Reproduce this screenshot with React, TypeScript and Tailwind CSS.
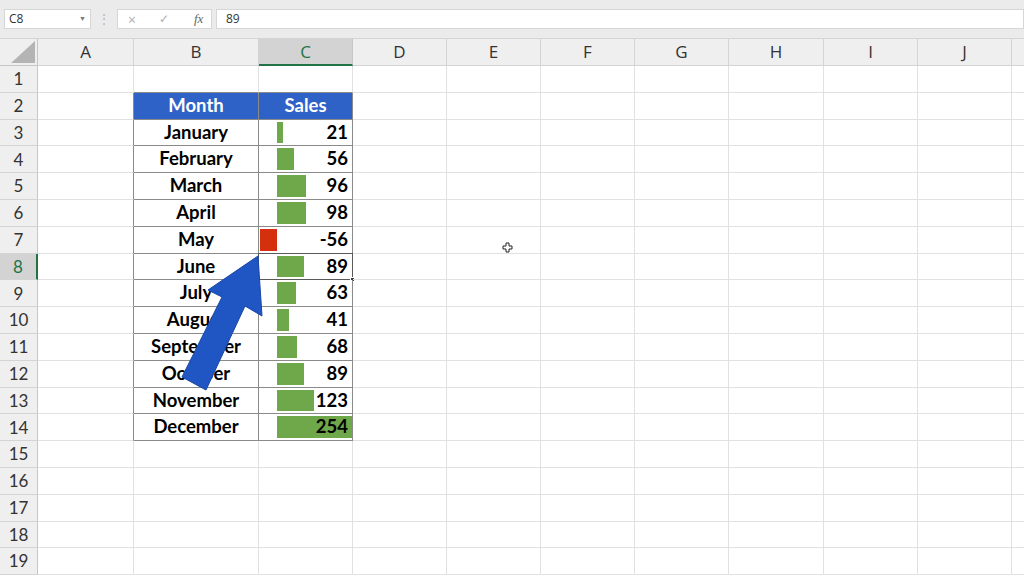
import React from "react";

const cols = [
  { key: "A", w: "w-[96px]" },
  { key: "B", w: "w-[125px]" },
  { key: "C", w: "w-[94px]" },
  { key: "D", w: "w-[94px]" },
  { key: "E", w: "w-[94px]" },
  { key: "F", w: "w-[94px]" },
  { key: "G", w: "w-[94px]" },
  { key: "H", w: "w-[95px]" },
  { key: "I", w: "w-[94px]" },
  { key: "J", w: "w-[94px]" },
  { key: "K", w: "w-[94px]" },
];

const data: [string, number][] = [
  ["January", 21],
  ["February", 56],
  ["March", 96],
  ["April", 98],
  ["May", -56],
  ["June", 89],
  ["July", 63],
  ["August", 41],
  ["September", 68],
  ["October", 89],
  ["November", 123],
  ["December", 254],
];

const SCALE = 0.3;

function SalesCell({ value }: { value: number }) {
  return (
    <div className="relative flex h-full w-full py-[2px]">
      <div className="flex w-[18px] justify-end">
        {value < 0 && (
          <div className="h-full bg-[#d5300d]" style={{ width: Math.abs(value) * SCALE }} />
        )}
      </div>
      {value > 0 && (
        <div className="h-full bg-[#6fa84a]" style={{ width: value * SCALE }} />
      )}
      <span className="absolute inset-y-0 right-[4px] flex items-center text-[18.5px] font-bold text-black">
        {value}
      </span>
    </div>
  );
}

function Row({ n }: { n: number }) {
  const inTable = n >= 2 && n <= 14;
  const selected = n === 8;
  return (
    <div className="flex h-[26.8px] shrink-0">
      <div
        className={`flex w-[38px] shrink-0 items-center justify-center border-b border-[#d4d4d4] text-[17px] ${
          selected
            ? "border-r-2 border-r-[#217346] bg-[#d3d3d3] text-[#217346]"
            : "border-r border-r-[#c6c6c6] bg-[#efefef] text-[#333]"
        }`}
      >
        {n}
      </div>
      {cols.map((c) => {
        let cls = "border-r border-b border-[#e1e1e1]";
        let content: React.ReactNode = null;
        if (c.key === "A" && inTable) cls = "border-b border-b-[#e1e1e1] border-r border-r-[#8a8a8a]";
        if ((c.key === "B" || c.key === "C") && n === 1) cls = "border-r border-r-[#e1e1e1] border-b border-b-[#8a8a8a]";
        if ((c.key === "B" || c.key === "C") && inTable) {
          if (n === 2) {
            cls = "border-r border-b border-[#8a8a8a] bg-[#2f62c7]";
            content = (
              <span className="flex h-full items-center justify-center text-[18.5px] font-bold text-white">
                {c.key === "B" ? "Month" : "Sales"}
              </span>
            );
          } else {
            const [m, v] = data[n - 3];
            cls = "border-r border-b border-[#8a8a8a] bg-white";
            content =
              c.key === "B" ? (
                <span className="flex h-full items-center justify-center text-[18.5px] font-bold text-black">
                  {m}
                </span>
              ) : (
                <SalesCell value={v} />
              );
          }
        }
        return (
          <div key={c.key} className={`relative shrink-0 ${c.w} ${cls}`}>
            {content}
            {selected && c.key === "C" && (
              <div className="absolute -inset-[1px] border border-[#5a5a5a]">
                <div className="absolute -bottom-[3px] -right-[3px] h-[5px] w-[5px] border border-white bg-[#3a3a3a]" />
              </div>
            )}
          </div>
        );
      })}
    </div>
  );
}

export default function App() {
  return (
    <div
      className="relative h-[576px] w-[1024px] overflow-hidden bg-white"
      style={{ fontFamily: "Lato, 'Open Sans', sans-serif" }}
    >
      {/* formula bar */}
      <div className="flex h-[39px] items-start border-b border-[#d4d4d4] bg-[#ebebeb] pt-[9px] font-['Open_Sans',sans-serif] text-[12px] text-[#333]">
        <div className="ml-[4px] flex h-[20px] w-[87px] items-center justify-between border border-[#d6d6d6] bg-white pl-[4px] pr-[4px]">
          <span>C8</span>
          <span className="text-[7px] text-[#777]">▼</span>
        </div>
        <div className="flex h-[20px] w-[26px] items-center justify-center text-[#b5b5b5]">⋮</div>
        <div className="flex h-[20px] w-[95px] items-center border border-[#d6d6d6] bg-white text-[#b0b0b0]">
          <span className="w-[32px] pl-[10px] text-[14px]">×</span>
          <span className="w-[32px] pl-[9px] text-[12px]">✓</span>
          <span className="pl-[12px] font-['Liberation_Serif',serif] text-[13px] italic text-[#666]">fx</span>
        </div>
        <div className="ml-[4px] flex h-[20px] flex-1 items-center border border-[#d6d6d6] bg-white pl-[9px]">
          89
        </div>
      </div>

      {/* column headers */}
      <div className="flex h-[27px] font-['Open_Sans',sans-serif] text-[17px]">
        <div className="relative w-[38px] shrink-0 border-r border-b border-[#c6c6c6] bg-[#efefef]">
          <svg className="absolute bottom-[2px] right-[2px]" width="24" height="22" viewBox="0 0 24 22">
            <polygon points="24,0 24,22 0,22" fill="#b4b4b4" />
          </svg>
        </div>
        {cols.map((c) => (
          <div
            key={c.key}
            className={`flex shrink-0 items-center justify-center ${c.w} ${
              c.key === "C"
                ? "border-r border-r-[#c6c6c6] border-b-2 border-b-[#217346] bg-[#d3d3d3] text-[#217346]"
                : "border-r border-b border-[#d4d4d4] bg-[#efefef] text-[#333]"
            }`}
          >
            {c.key === "K" ? "" : c.key}
          </div>
        ))}
      </div>

      {/* rows */}
      <div className="flex flex-col">
        {Array.from({ length: 19 }, (_, i) => (
          <Row key={i} n={i + 1} />
        ))}
      </div>

      {/* annotation arrow */}
      <svg className="pointer-events-none absolute left-0 top-0" width="1024" height="576">
        <polygon
          points="258,256 262,316 245,306 206,390 182,377 222,297 208,290"
          fill="#1f56c3"
          stroke="#1a47a3"
          strokeWidth="1"
          strokeLinejoin="round"
        />
      </svg>

      {/* mouse pointer */}
      <svg className="pointer-events-none absolute left-[502px] top-[242px]" width="11" height="11" viewBox="0 0 11 11">
        <path d="M4 1h3v3h3v3H7v3H4V7H1V4h3z" fill="white" stroke="#222" strokeWidth="1" />
      </svg>
    </div>
  );
}
